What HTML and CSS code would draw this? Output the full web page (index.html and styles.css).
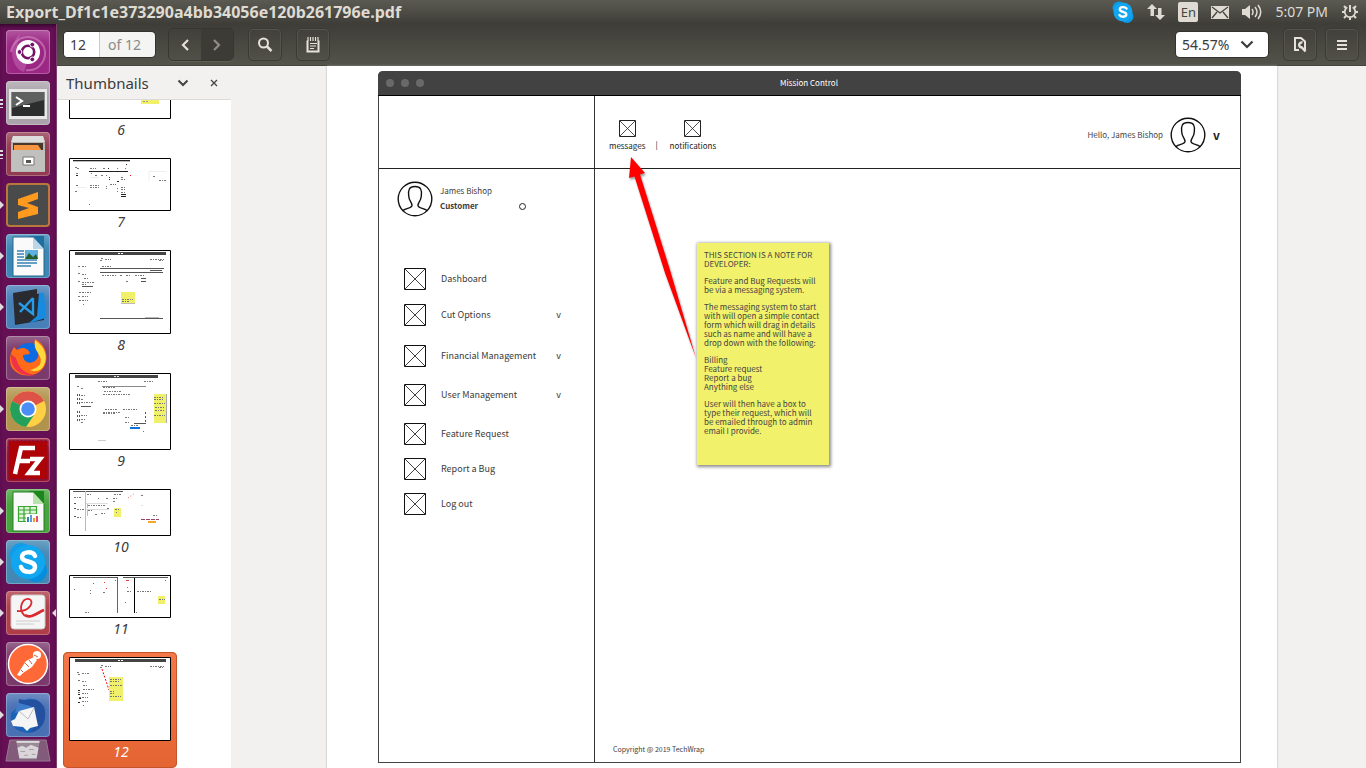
FILE: index.html
```html
<!DOCTYPE html>
<html lang="en">
<head>
<meta charset="utf-8">
<title>Export_Df1c1e373290a4bb34056e120b261796e.pdf</title>
<link rel="stylesheet" href="styles.css">
</head>
<body>
<svg class="defs" aria-hidden="true">
  <defs>
    <symbol id="box" viewBox="0 0 22 22"><path d="M.5.5h21v21H.5z" fill="#fff" stroke="#111"/><path d="M1 1l20 20M21 1L1 21" stroke="#111" stroke-width=".8" fill="none"/></symbol>
    <symbol id="box-small" viewBox="0 0 17 17"><path d="M.5.5h16v16H.5z" fill="#fff" stroke="#222"/><path d="M1 1l15 15M16 1L1 16" stroke="#222" stroke-width=".8" fill="none"/></symbol>
    <symbol id="person" viewBox="0 0 36 36"><g fill="none" stroke="#111" stroke-width="1.4"><circle cx="18" cy="18" r="16.800"/><path d="M5.500 30C8 27 15 27.500 15 24.500C15 21 12 20 11.700 15C11 9 12 5.500 18 5.500S25 9 24.300 15C24 20 21 21 21 24.500C21 27.500 28 27 30.500 30"/></g></symbol>
  </defs>
</svg>

<header class="panel">
  <h1 class="panel-title">Export_Df1c1e373290a4bb34056e120b261796e.pdf</h1>
  <div class="indicators">
    <svg width="22" height="22" viewBox="0 0 22 22"><circle cx="7" cy="7" r="6.500" fill="#0b9be6"/><circle cx="15" cy="15.500" r="6.500" fill="#0b9be6"/><circle cx="11" cy="11" r="9.500" fill="#12a5f0"/><path d="M14.500 7.500C13 5.500 7.800 5.500 7.800 8.500C7.800 11.500 14.300 10.300 14.300 13.300C14.300 16.500 8.500 16.300 7.500 14" fill="none" stroke="#fff" stroke-width="2.400" stroke-linecap="round"/></svg>
    <svg width="18" height="18" viewBox="0 0 18 18" fill="#dfdbd2"><path d="M5 1l5 5H7v7H3.500V6H0zM13 17l-5-5h3V5h3.500v7H18z"/></svg>
    <span class="lang">En</span>
    <svg width="18" height="13" viewBox="0 0 18 13"><path d="M0 0h18v13H0z" fill="#dfdbd2"/><path d="M1 1l8 6 8-6M1 12l5-6M17 12l-5-6" fill="none" stroke="#45443e" stroke-width="1.300"/></svg>
    <svg width="20" height="18" viewBox="0 0 20 18"><path d="M0 6h3l5-4v14l-5-4H0z" fill="#dfdbd2"/><path d="M10 6q2 3 0 6M13 4q4 5 0 10M16 2q5.500 7 0 14" fill="none" stroke="#dfdbd2" stroke-width="1.500"/></svg>
    <time class="clock">5:07 PM</time>
    <svg width="18" height="18" viewBox="0 0 18 18" fill="none" stroke="#dfdbd2"><path d="M6.300 4.300a5.300 5.300 0 1 0 5.400 0" stroke-width="1.800"/><path d="M9 2v7" stroke-width="2"/><path d="M5 5L3 3M13 5l2-2M3.500 9H1M17 9h-2.500M5 13l-2 2M13 13l2 2M9 14.500V17" stroke-width="2"/></svg>
  </div>
</header>

<div class="desktop">
<nav class="launcher" aria-label="Launcher">
  <button class="tile dash" aria-label="Dash"><svg viewBox="0 0 44 44"><path d="M5 22C8 4 30 2 38 17C42 28 34 42 20 40" fill="none" stroke="#d18cc2" stroke-width="2" opacity=".6"/><path d="M14 4C2 14 4 38 18 42L22 30L10 20z" fill="#d68acb" opacity=".35"/><circle cx="22" cy="22" r="12" fill="#fff"/><circle cx="22" cy="22" r="6.200" fill="none" stroke="#751267" stroke-width="2.600"/><g fill="#751267" stroke="#fff"><circle cx="13.500" cy="22" r="2.400"/><circle cx="26.300" cy="14.600" r="2.400"/><circle cx="26.300" cy="29.400" r="2.400"/></g></svg></button>
  <button class="tile silver multi" aria-label="Terminal"><svg viewBox="0 0 44 44"><path d="M3 8h38v30H3z" fill="#e8e8e8"/><path d="M5.500 11h33v24h-33z" fill="#2b2e2d"/><path d="M6 11h32v8L6 27z" fill="#5e615f"/><path d="M10 16l6 4-6 4M17 25h7" fill="none" stroke="#fff" stroke-width="2"/></svg></button>
  <button class="tile brick multi" aria-label="Files"><svg viewBox="0 0 44 44"><path d="M7 4h30l2 8v28H5V12z" fill="#b8b8b6"/><path d="M7 4h30l2 6H5z" fill="#ddd"/><path d="M7 11h30v9H7z" fill="#49372b"/><path d="M8 13h24l4 6H8z" fill="#f79540"/><path d="M6 18h33v21H6z" fill="#c0c0be"/><path d="M17 25h11v8H17z" fill="#fff" stroke="#777"/><path d="M20 28h5v3h-5z" fill="#555"/></svg></button>
  <button class="tile sublime run" aria-label="Sublime Text"><svg viewBox="0 0 44 44"><path d="M12 16l20-7v7l-11 4 11 4v7l-20 5v-7l11-4-11-3z" fill="#ff9a1f"/></svg></button>
  <button class="tile writer run" aria-label="LibreOffice Writer"><svg viewBox="0 0 44 44"><path d="M23 2h15v14z" fill="#1e6fa0"/><path d="M7 3h20l11 12v27H7z" fill="#fafafa" stroke="#27698c"/><path d="M27 3v12h11z" fill="#b9d7e8"/><path d="M11 17h7M11 20h7M11 23h7M11 26h20M11 29h20M11 32h14" stroke="#3683b2" stroke-width="1.500"/><path d="M19 16h13v9H19z" fill="#5eb0dd"/><path d="M19 25l4-6 4 4 3-3 2 5z" fill="#275e2e"/></svg></button>
  <button class="tile blue run" aria-label="Visual Studio Code"><svg viewBox="0 0 44 44"><path d="M7 8l24-4v5l7-1v27l-29 5z" fill="#292b30"/><path d="M33 8h5l2 25-17 5 8-7z" fill="#168be0"/><path d="M27 13v16L13 18M27 13L14 27" fill="none" stroke="#289be6" stroke-width="2.400"/></svg></button>
  <button class="tile plum" aria-label="Firefox"><svg viewBox="0 0 44 44"><circle cx="23" cy="21" r="14" fill="#0c6be2"/><path d="M8 11l3 3c5-4 12-2 13 4l-7 1c0 8 8 10 13 5 7-7-3-13-1-21 12 6 14 20 9 28-8 12-27 11-33-1-2-6-1-13 3-19z" fill="#ff6b18"/><path d="M29 4c10 7 13 16 9 25-3 7-11 7-14 5 12-3 13-9 8-17-3-4-4-8-3-13z" fill="#ffd83c"/><path d="M5 18c-1 17 12 23 25 21-11-1-18-7-20-17z" fill="#ef3149"/></svg></button>
  <button class="tile khaki run" aria-label="Chrome"><svg viewBox="0 0 44 44"><circle cx="22" cy="22" r="18" fill="#ffd045"/><path d="M22 22L6 14A18 18 0 0 1 38 14z" fill="#de5348"/><path d="M22 22L6 14A18 18 0 0 0 20 40L28 28z" fill="#23a05b"/><circle cx="22" cy="22" r="8.500" fill="#fff"/><circle cx="22" cy="22" r="6.800" fill="#4b8df6"/></svg></button>
  <button class="tile filezilla" aria-label="FileZilla"><svg viewBox="0 0 44 44"><path d="M2.500 2.500h39v39h-39z" fill="#ad0206" stroke="#701b51" stroke-dasharray="2 2" stroke-width="1.500"/><path d="M9 36l6-26h14M12 23h12M24 21h10L23 35h11" fill="none" stroke="#fff" stroke-width="4.500"/></svg></button>
  <button class="tile calc run" aria-label="LibreOffice Calc"><svg viewBox="0 0 44 44"><path d="M23 2h15v14z" fill="#1b861b"/><path d="M7 3h20l11 12v27H7z" fill="#fafafa" stroke="#267f24"/><path d="M27 3v12h11z" fill="#b7e2ac"/><path d="M12.500 17.500h18v15h-18zM12 21h19M12 25h19M12 29h19M18 17v16M24 17v16" fill="#dff3da" stroke="#38a52f" stroke-width="1.200"/><path d="M20 25h12v9H20z" fill="#fff"/><path d="M22 33v-5" stroke="#397db7" stroke-width="2"/><path d="M25 33v-7" stroke="#5b9bd5" stroke-width="2"/><path d="M28 33v-4" stroke="#f49b26" stroke-width="2"/><path d="M31 33v-6" stroke="#d14" stroke-width="1.500"/></svg></button>
  <button class="tile skype run" aria-label="Skype"><svg viewBox="0 0 44 44"><circle cx="15" cy="14" r="11" fill="#129be8"/><circle cx="30" cy="31" r="11" fill="#078ddd"/><circle cx="22" cy="22" r="17" fill="#11a6ef"/><path d="M29 16C27 11 16 11 16 17C16 23 29 20 29 27C29 34 17 33 15 27" fill="none" stroke="#fff" stroke-width="4.500" stroke-linecap="round"/></svg></button>
  <button class="tile evince run focus" aria-label="Document Viewer"><svg viewBox="0 0 44 44"><rect x="5" y="4" width="34" height="34" rx="3" fill="#f5f5f5" stroke="#ccc"/><path d="M11 20C24 21 29 10 23 8C16 7 12 18 18 24C24 29 31 21 38 19" fill="none" stroke="#d92b30" stroke-width="1.800"/><path d="M19 24C25 28 31 22 38 19" fill="none" stroke="#d92b30" stroke-width="2.600"/><path d="M10 30h24M10 33h18" stroke="#ccc"/></svg></button>
  <button class="tile plum" aria-label="Postman"><svg viewBox="0 0 44 44"><circle cx="22" cy="22" r="19.500" fill="#ff6937" stroke="#fff" stroke-width="1.500"/><circle cx="31" cy="13" r="4" fill="#fff"/><path d="M11 33l9-14 8-4 3 3-5 7-9 6-3 3z" fill="#fff"/><path d="M19 21l4 4M23 18l3 4M28 13l4 2M15 28l2 2" stroke="#d0603a"/></svg></button>
  <button class="tile mail run" aria-label="Thunderbird"><svg viewBox="0 0 44 44"><path d="M12 14C18 2 34 4 38 15C42 29 33 40 22 40C10 39 3 32 5 20z" fill="#1c62b5"/><path d="M13 6C24 9 32 3 38 14C42 27 36 38 24 39C36 28 31 17 12 16z" fill="#2450a0"/><path d="M9 20L12 9C15 12 24 11 29 16z" fill="#3d7cc8"/><path d="M13 18l15-4 4 19-8 2-3 3-4-4-10-1-2-5 4-2z" fill="#f5f5f5"/><path d="M13 18l9 8 6-11" fill="none" stroke="#bbb"/></svg></button>
  <button class="trash" aria-label="Trash"><svg viewBox="0 0 48 24"><path d="M5 1h38l4 22H1z" fill="#815b79" stroke="#9b7a93"/><path d="M12 3h24l-3 18H15z" fill="#9a8996"/><path d="M12 3h24" stroke="#ddd" stroke-width="2"/><path d="M13 9l5-2 4 2 5-3 8 3-2 11H15z" fill="#d9d5d8"/><path d="M16 13h5M25 11h5M20 17h4M28 16h4" stroke="#a29ea1"/></svg></button>
</nav>

<main class="viewer">
  <div class="toolbar">
    <div class="pager"><input type="text" value="12" aria-label="Page"><span>of 12</span></div>
    <div class="nav-group">
      <button aria-label="Previous page"><svg width="10" height="14" viewBox="0 0 10 14"><path d="M8 2L3 7l5 5" fill="none" stroke="#e6e1d9" stroke-width="2.200"/></svg></button>
      <button class="off" aria-label="Next page"><svg width="10" height="14" viewBox="0 0 10 14"><path d="M2 2l5 5-5 5" fill="none" stroke="#8f8d84" stroke-width="2.200"/></svg></button>
    </div>
    <button class="tool" aria-label="Find"><svg width="16" height="16" viewBox="0 0 16 16" fill="none" stroke="#e6e1d9"><circle cx="6.500" cy="6" r="4.500" stroke-width="2"/><path d="M10 9.500l4.500 4.500" stroke-width="2.500"/></svg></button>
    <button class="tool" aria-label="Annotations"><svg width="14" height="16" viewBox="0 0 14 16"><path d="M1.500 3.500v11h11v-11" fill="none" stroke="#e6e1d9" stroke-width="2"/><path d="M2 0v4M4.500 0v4M7 0v4M9.500 0v4M12 0v4M4 6.500h7M4 9h6M4 11.500h4" stroke="#e6e1d9" stroke-width="1.200"/></svg></button>
    <div class="zoom"><select aria-label="Zoom"><option>54.57%</option></select><svg width="14" height="9" viewBox="0 0 14 9"><path d="M1.500 1.500L7 7l5.500-5.500" fill="none" stroke="#3c3c3c" stroke-width="2.200"/></svg></div>
    <button class="tool last" aria-label="Page view"><svg width="14" height="17" viewBox="0 0 14 17" fill="none" stroke="#e6e1d9" stroke-width="2"><path d="M6 14H2V2h6l4 3.500V14"/><path d="M9.500 6.500a2.600 2.600 0 1 0 0 5M8 10.500l4.500 5" stroke-width="2.400"/></svg></button>
    <button class="tool last" aria-label="Menu"><svg width="12" height="12" viewBox="0 0 12 12"><path d="M1 2h10M1 6h10M1 10h10" stroke="#e6e1d9" stroke-width="2"/></svg></button>
  </div>

  <div class="content">
    <aside class="sidebar">
      <div class="side-head">
        <button class="side-mode"><span>Thumbnails</span><svg width="12" height="8" viewBox="0 0 12 8"><path d="M1.500 1.500L6 6l4.500-4.500" fill="none" stroke="#444" stroke-width="2"/></svg></button>
        <button class="side-close" aria-label="Close sidebar"><svg width="8" height="8" viewBox="0 0 8 8"><path d="M1 1l6 6M7 1L1 7" stroke="#444" stroke-width="1.300"/></svg></button>
      </div>
      <div class="thumbs">
        <button class="thumb first"><svg viewBox="0 0 102 19"><path d="M72 0h18v4H72z" fill="#f0f06a"/><path d="M74 1.500h6" stroke="#999" stroke-dasharray="2 1"/><path d="M.5 0v18.500h101V0" fill="none" stroke="#000"/></svg><span>6</span></button>
        <button class="thumb"><svg viewBox="0 0 102 53"><path class="frame" d="M.5.500h101v52H.5z"/><path d="M4 2.500h57M20 13.500h39" class="k"/><path d="M4 3.500h57" stroke="#bbb"/><path d="M57 6.500h1M39 10.500h1M7 17.500h2M40 19.500h1M40 21.500h1M52 36.500h5M52 38.500h5M48 23.500h2" class="k"/><path d="M6 9.500h2M8 10.500h2M21 10.500h6M34 10.500h2M48 10.500h1M56 10.500h1M7 15.500h3M22 15.500h1M26 17.500h3M32 17.500h2M37 17.500h1M52 19.500h3M52 21.500h4M84 18.500h3M90 22.500h8M7 27.500h2M21 27.500h10M37 28.500h1M21 29.500h9M37 30.500h1M6 33.500h2M41 26.500h6M52 29.500h4M48 30.500h1M52 31.500h4M48 33.500h1M52 34.500h4M20 46.500h1" class="g"/><path d="M80 23V13.500h17M9 29.500h8M21 19.500h9" fill="none" stroke="#eee"/><path d="M61 17.500h1" stroke="#e11"/></svg><span>7</span></button>
        <button class="thumb"><svg viewBox="0 0 102 84"><path class="frame" d="M.5.500h101v83H.5z"/><path d="M6 2h91v3H6z" fill="#444"/><path d="M49 3.500h5" stroke="#fff" stroke-dasharray="2 1"/><path d="M31 18.500h64M31 22.500h63M81 20.500h12M31 68.500h63M72 28.500h5M72 31.500h5M13 36.500h11" class="s"/><path d="M32 8.500h2M31 10.500h3M36 9.500h6M81 9.500h14M90 10.500h4M9 16.500h3M13 16.500h4M33 16.500h9M33 25.500h14M51 25.500h3M57 25.500h5M66 25.500h10M57 31.500h2M9 23.500h2M13 24.500h5M15 28.500h4M9 31.500h2M13 32.500h12M13 34.500h5M10 42.500h2M13 42.500h9M9 46.500h3M13 46.500h6M10 50.500h2M13 50.500h6M14 54.500h1M78 67.500h10" class="g"/><path d="M52 42h14v11H52z" fill="#f0f06a"/><path d="M53 49.500h11M53 51.500h8" class="g"/><path d="M52 53.500h14M76 67.500h14" stroke="#bbb"/></svg><span>8</span></button>
        <button class="thumb"><svg viewBox="0 0 102 77"><path class="frame" d="M.5.500h101v76H.5z"/><path d="M6 2h83v3H6z" fill="#444"/><path d="M45 3.500h5" stroke="#ddd" stroke-dasharray="2 1"/><path d="M33 13.500h44" stroke="#888"/><path d="M12 33.500h10M65 50.500h12" class="s"/><path d="M8.500 21v10M8.500 38v12M10.500 21v10M10.500 38v12M76.500 39v11" class="s" stroke-dasharray="2 2"/><path d="M29 8.500h9M75 8.500h10M8 13.500h3M12 15.500h2M34 14.500h13M35 18.500h18M34 21.500h27M12 22.500h5M12 26.500h3M12 29.500h13M36 36.500h12M54 36.500h14M34 39.500h18M34 40.500h13M12 42.500h6M12 46.500h5M12 49.500h3M56 44.500h5M56 49.500h4M62 52.500h8M74 58.500h1" class="g"/><path d="M29 67.500h8" stroke="#ccc"/><path d="M61 54h10v2H61z" fill="#0b74dc"/><path d="M85 21h12v29H85z" fill="#f0f06a"/><path d="M97.500 21v29" stroke="#aaa"/><path d="M85 24.500h10M85 26.500h9M85 30.500h11M86 34.500h9M86 37.500h10M85 42.500h11" class="g"/></svg><span>9</span></button>
        <button class="thumb"><svg viewBox="0 0 102 47"><path class="frame" d="M.5.500h101v46H.5z"/><path d="M4 2.500h50M5 14.500h2M5 19.500h2M5 27.500h2" class="s"/><path d="M16.500 2v40M18.500 14v5M18.500 20v7" stroke="#bbb"/><path d="M5 8.500h8M18 5.500h5M29 9.500h1M37 9.500h2M45 5.500h8M44 9.500h5M72 6.500h2M8 20.500h7M19 16.500h17M38 19.500h2M19 21.500h5M32 24.500h4M26 25.500h2M8 28.500h4M44 12.500h2M84 26.500h5" class="g"/><path d="M17 14.500h22M17 20.500h23M72 16.500h2" stroke="#ddd"/><path d="M59 9l7-5" stroke="#f66" stroke-dasharray="1 2"/><path d="M45 19h7v9h-7z" fill="#f0f06a"/><path d="M46 20.500h5M47 23.500h1" class="g"/><path d="M72 30.500h18" stroke="#946" stroke-dasharray="4 1"/><path d="M79 32h8v2h-8z" fill="#f5a72d"/></svg><span>10</span></button>
        <button class="thumb"><svg viewBox="0 0 102 43"><path class="frame" d="M.5.500h101v42H.5z"/><path d="M4 2.500h45M54 2.500h45" class="s"/><path d="M48.500 3v35" stroke="#666"/><path d="M65.500 3v35" stroke="#000"/><path d="M5 14.500h1M21 15.500h1M21 18.500h1M34 17.500h3M58 12.500h1M58 16.500h5M68 16.500h15M56 27.500h1M16 37.500h4M67 37.500h1M96 5.500h1" class="g"/><path d="M24 8.500h1M35 7.500h1M37 13.500h1M46 5.500h1M57 5.500h3" stroke="#e33"/><path d="M89 21h7v8h-7z" fill="#f0f06a"/><path d="M90 24.500h6" class="g"/></svg><span>11</span></button>
        <button class="thumb selected"><svg viewBox="0 0 102 84"><path class="frame" d="M.5.500h101v83H.5z"/><path d="M6 2h91v3H6z" fill="#444"/><path d="M49 3.500h5" stroke="#fff" stroke-dasharray="2 1"/><path d="M32 8.500h2M31 10.500h3M36 9.500h6M81 9.500h14M90 10.500h4M8 15.500h3M9 17.500h2M13 16.500h8M9 23.500h2M13 24.500h5M14 28.500h4M14 32.500h11M9 35.500h2M13 36.500h6M10 40.500h2M13 40.500h6M13 44.500h6M14 48.500h1" class="g"/><path d="M9 33.500h2M9 37.500h2M10 41.500h2M9 45.500h2" class="k"/><path d="M33 12l7 21" stroke="#e11" stroke-dasharray="2 1.500"/><path d="M40 20h14v24H40z" fill="#f0f06a"/><path d="M41 22.500h11M41 24.500h10M41 28.500h12M41 34.500h5M41 36.500h5M41 39.500h11" class="g"/></svg><span>12</span></button>
      </div>
    </aside>

    <section class="document">
      <div class="page">
        <div class="mock">
          <div class="mock-bar"><i></i><i></i><i></i><h2>Mission Control</h2></div>
          <div class="corner"></div>
          <div class="mock-top">
            <a class="shortcut" href="#messages"><svg class="i16"><use href="#box-small"/></svg>messages</a>
            <span class="sep">|</span>
            <a class="shortcut" href="#notifications"><svg class="i16"><use href="#box-small"/></svg>notifications</a>
            <span class="hello">Hello, James Bishop</span>
            <svg class="avatar"><use href="#person"/></svg>
            <button class="more" aria-label="Account menu">v</button>
          </div>
          <div class="mock-side">
            <div class="profile">
              <svg class="avatar"><use href="#person"/></svg>
              <div class="who"><p>James Bishop</p><p class="role"><b>Customer</b><i></i></p></div>
            </div>
            <nav class="menu">
              <a href="#dashboard"><svg class="i22"><use href="#box"/></svg><span>Dashboard</span></a>
              <a href="#cut"><svg class="i22"><use href="#box"/></svg><span>Cut Options</span><em>v</em></a>
              <a href="#finance"><svg class="i22"><use href="#box"/></svg><span>Financial Management</span><em>v</em></a>
              <a href="#users"><svg class="i22"><use href="#box"/></svg><span>User Management</span><em>v</em></a>
              <a href="#feature"><svg class="i22"><use href="#box"/></svg><span>Feature Request</span></a>
              <a href="#bug"><svg class="i22"><use href="#box"/></svg><span>Report a Bug</span></a>
              <a href="#logout"><svg class="i22"><use href="#box"/></svg><span>Log out</span></a>
            </nav>
          </div>
          <div class="mock-main">
            <svg class="arrow" width="76" height="212" viewBox="0 0 76 212"><path d="M6 2L20 18L15 19.500L45 115L71 203L40 118L9.500 21.500L4 23z" fill="#f00"/></svg>
            <div class="note">
              <p>THIS SECTION IS A NOTE FOR<br>DEVELOPER:</p>
              <p>Feature and Bug Requests will<br>be via a messaging system.</p>
              <p>The messaging system to start<br>with will open a simple contact<br>form which will drag in details<br>such as name and will have a<br>drop down with the following:</p>
              <p>Billing<br>Feature request<br>Report a bug<br>Anything else</p>
              <p>User will then have a box to<br>type their request, which will<br>be emailed through to admin<br>email I provide.</p>
            </div>
            <footer>Copyright @ 2019 TechWrap</footer>
          </div>
        </div>
      </div>
    </section>
  </div>
</main>
</div>
</body>
</html>
```

FILE: styles.css
```css
* { box-sizing: border-box; }
body { margin: 0; height: 100vh; overflow: hidden; display: flex; flex-direction: column; font: 15px/20px "Noto Sans", sans-serif; color: #3c3c3c; background: #f2f1f0; }
button, input, select { font: inherit; color: inherit; border: 0; padding: 0; margin: 0; background: none; }
p, h1, h2 { margin: 0; }
svg { display: block; flex: none; }
a { color: inherit; text-decoration: none; }
.defs { position: absolute; width: 0; height: 0; }

/* top panel */
.panel { flex: 0 0 24px; display: flex; align-items: center; justify-content: space-between; padding: 0 7px 0 6px; background: linear-gradient(#5b5a52, #3e3d38); color: #dfdbd2; }
.panel-title { font-size: 16px; line-height: 24px; font-weight: 700; }
.indicators { display: flex; align-items: center; gap: 13px; }
.lang { width: 20px; height: 20px; border-radius: 2px; background: #dfdbd2; color: #45443e; text-align: center; font-size: 13px; }
.clock { font-size: 14px; }

/* launcher */
.desktop { flex: 1; min-height: 0; display: flex; }
.launcher { flex: 0 0 57px; display: flex; flex-direction: column; align-items: flex-start; gap: 7px; padding: 6px 0 0 6px; background: #650f54; border-right: 1px solid #7e3f71; box-shadow: inset 0 4px 4px -2px #30062a; overflow: hidden; position: relative; }
.tile { position: relative; flex: none; width: 44px; height: 44px; border-radius: 4px; box-shadow: inset 0 0 0 1px rgba(255,255,255,.25), inset 0 12px 12px -6px rgba(255,255,255,.25); }
.tile svg { width: 44px; height: 44px; }
.dash { background: #9c2684; }
.silver { background: #aaa4aa; }
.brick { background: #923b50; }
.sublime { background: #4a4a4a; box-shadow: inset 0 0 0 2px #b9783c; }
.writer { background: #3b86b5; }
.blue { background: #477fb8; }
.plum { background: #7a3a6c; }
.khaki { background: #b1934c; }
.filezilla { background: #9a1230; }
.calc { background: #46a33c; }
.skype { background: #4388b4; }
.evince { background: #ae3d47; }
.mail { background: #4a70b4; }
.run::before, .focus::after { content: ""; position: absolute; top: 18px; border: 4px solid transparent; }
.run::before { left: -6px; border-left-color: #ddd; border-right-width: 0; }
.focus::after { right: -6px; border-right-color: #ddd; border-left-width: 0; }
.multi::before { content: ""; position: absolute; left: -6px; top: 18px; width: 3px; height: 9px; background: repeating-linear-gradient(#ddd 0 2px, transparent 2px 4px); }
.trash { flex: none; margin: -5px 0 0 -1px; }
.trash svg { width: 46px; height: 23px; }

/* toolbar */
.viewer { flex: 1; min-width: 0; display: flex; flex-direction: column; }
.toolbar { flex: 0 0 42px; display: flex; align-items: center; padding: 0 7px; background: linear-gradient(#3e3d38, #54534a); border-bottom: 1px solid #45443d; }
.pager { display: flex; width: 91px; height: 25px; border-radius: 4px; overflow: hidden; background: #f4f4f3; box-shadow: 0 0 0 1px #33322e; line-height: 25px; }
.pager input { width: 36px; padding-left: 6px; background: #fff; border-right: 1px solid #ccc; font-size: 14px; }
.pager span { flex: 1; padding-left: 8px; color: #8a8a8a; font-size: 14px; }
.nav-group { display: flex; margin: 0 14px 0 13px; border: 1px solid #37362f; border-radius: 5px; overflow: hidden; box-shadow: 0 1px 0 #605f56; }
.nav-group button { display: grid; place-items: center; width: 32px; height: 31px; }
.nav-group .off { background: #3c3b36; }
.tool { display: grid; place-items: center; width: 34px; height: 33px; border: 1px solid #3a3933; border-radius: 5px; box-shadow: inset 0 0 0 1px #55544b; }
.tool + .tool { margin-left: 14px; }
.zoom { position: relative; margin-left: auto; width: 92px; height: 25px; border-radius: 4px; background: #fff; box-shadow: 0 0 0 1px #33322e; }
.zoom select { appearance: none; width: 100%; height: 25px; padding-left: 6px; font-size: 14px; }
.zoom svg { position: absolute; right: 14px; top: 8px; pointer-events: none; }
.zoom + .tool { margin-left: 15px; }
.tool.last + .tool.last { margin-left: 8px; }

/* sidebar */
.content { flex: 1; min-height: 0; display: flex; }
.sidebar { flex: 0 0 174px; display: flex; flex-direction: column; min-height: 0; }
.side-head { flex: 0 0 34px; display: flex; align-items: center; border-bottom: 1px solid #dcdad8; padding: 0 13px 0 9px; }
.side-mode { flex: 1; display: flex; align-items: center; gap: 28px; }
.thumbs { flex: 1; min-height: 0; overflow: hidden; display: flex; flex-direction: column; gap: 7px; padding-left: 6px; background: #fff; }
.thumb { flex: none; display: block; width: 114px; padding: 5px 6px; border-radius: 5px; }
.thumb svg { width: 102px; }
.thumb span { display: block; line-height: 22px; font-style: italic; font-size: 14px; text-align: center; padding-left: 2px; }
.first { padding-top: 0; }
.selected { background: linear-gradient(#f37748, #e46432); box-shadow: inset 0 0 0 1px #c5542a; color: #fff; }
.frame { fill: #fff; stroke: #000; }
.k { stroke: #222; }
.s { stroke: #555; }
.g { stroke: #777; stroke-dasharray: 2 1 1 1; }

/* document */
.document { flex: 1; min-width: 0; display: flex; padding: 0 89px 0 96px; background: #f2f1f0; }
.page { flex: 1; display: flex; padding: 5px 36px 5px 51px; background: #fff; box-shadow: 0 0 2px #aaa; font-family: "Noto Sans CJK SC", sans-serif; }
.mock { flex: 1; display: grid; grid-template: 25px 73px 1fr / 216px 1fr; border: 1px solid #444; border-top: 0; border-radius: 5px 5px 0 0; font-size: 8px; line-height: 10px; }
.mock-bar { grid-column: 1 / -1; display: flex; align-items: center; gap: 7px; padding: 0 8px; margin: 0 -1px; background: #424242; border-bottom: 1px solid #000; border-radius: 5px 5px 0 0; color: #fff; }
.mock-bar i { width: 8px; height: 8px; border-radius: 50%; background: #696969; }
.mock-bar h2 { flex: 1; text-align: center; font-size: 8px; font-weight: 400; padding-right: 46px; }
.corner, .mock-side { border-right: 1px solid #333; }
.corner, .mock-top { border-bottom: 1px solid #222; }
.mock-top { display: flex; align-items: center; padding: 6px 20px 0 14px; color: #222; }
.shortcut { display: flex; flex-direction: column; align-items: center; gap: 4px; }
.sep { padding: 20px 12px 0 10px; }
.i16 { width: 17px; height: 17px; }
.i22 { width: 22px; height: 22px; }
.avatar { width: 36px; height: 36px; }
.hello { margin-left: auto; padding-right: 7px; color: #444; }
.more { padding-left: 7px; font-size: 12px; font-weight: 700; }
.profile { display: flex; gap: 7px; padding: 12px 0 0 18px; }
.who { padding-top: 5px; display: flex; flex-direction: column; gap: 5px; }
.role { display: flex; align-items: center; gap: 41px; }
.role i { width: 7px; height: 7px; border: 1px solid #222; border-radius: 50%; }
.menu { display: grid; grid-template-rows: 36px 41px 39px 39px 35px 35px 22px; padding: 51px 33px 0 25px; font-size: 9px; line-height: 22px; white-space: nowrap; }
.menu a { display: flex; align-items: flex-start; gap: 15px; }
.menu span { flex: 1; }
.menu em { font-style: normal; }
.mock-main { position: relative; display: flex; flex-direction: column; }
.arrow { position: absolute; left: 30px; top: -14px; filter: drop-shadow(1px 2px 1px rgba(0,0,0,.4)); }
.note { position: absolute; left: 102px; top: 74px; width: 132px; min-height: 222px; padding: 7px; display: flex; flex-direction: column; gap: 8px; background: #f1f16b; box-shadow: 1px 1px 3px 1px rgba(0,0,0,.45); line-height: 9px; white-space: nowrap; color: #444; }
footer { margin-top: auto; padding: 0 18px 8px; font-size: 7px; line-height: 10px; }
```
